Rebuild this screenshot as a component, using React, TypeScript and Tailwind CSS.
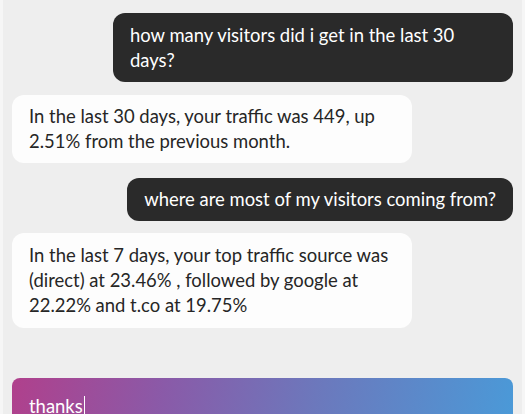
export default function App() {
  const font = { fontFamily: "Lato, 'Open Sans', sans-serif" };
  return (
    <div
      className="w-[525px] h-[414px] overflow-hidden bg-[#eeeeee] border-x-[3px] border-[#f6f6f6] text-[18.45px] leading-[25px]"
      style={font}
    >
      <div className="flex flex-col px-[9px] pt-[13px]">
        <div className="self-end max-w-[400px] rounded-[12px] bg-[#2a2a2a] px-[17px] py-[9.5px] text-white">
          how many visitors did i get in the last 30 days?
        </div>
        <div className="mt-[13px] self-start max-w-[400px] rounded-[12px] bg-[#fdfdfd] px-[17px] py-[9px] text-[#262626]">
          In the last 30 days, your traffic was 449, up 2.51% from the previous month.
        </div>
        <div className="mt-[15px] self-end max-w-[400px] rounded-[12px] bg-[#2a2a2a] px-[17px] py-[9px] text-white">
          where are most of my visitors coming from?
        </div>
        <div className="mt-[12px] self-start max-w-[400px] rounded-[12px] bg-[#fdfdfd] px-[17px] py-[10px] text-[#262626]">
          In the last 7 days, your top traffic source was (direct) at 23.46% , followed by google at 22.22% and t.co at 19.75%
        </div>
        <div className="mt-[50px] h-[60px] rounded-t-[8px] bg-[linear-gradient(100deg,#b0408c_0%,#8a5aa8_30%,#6c78bc_60%,#4a9ad8_100%)] px-[17px] pt-[16px] text-white">
          <span>thanks</span>
          <span className="ml-[1px] inline-block h-[22px] w-[1.5px] bg-white align-[-5px]" />
        </div>
      </div>
    </div>
  );
}
